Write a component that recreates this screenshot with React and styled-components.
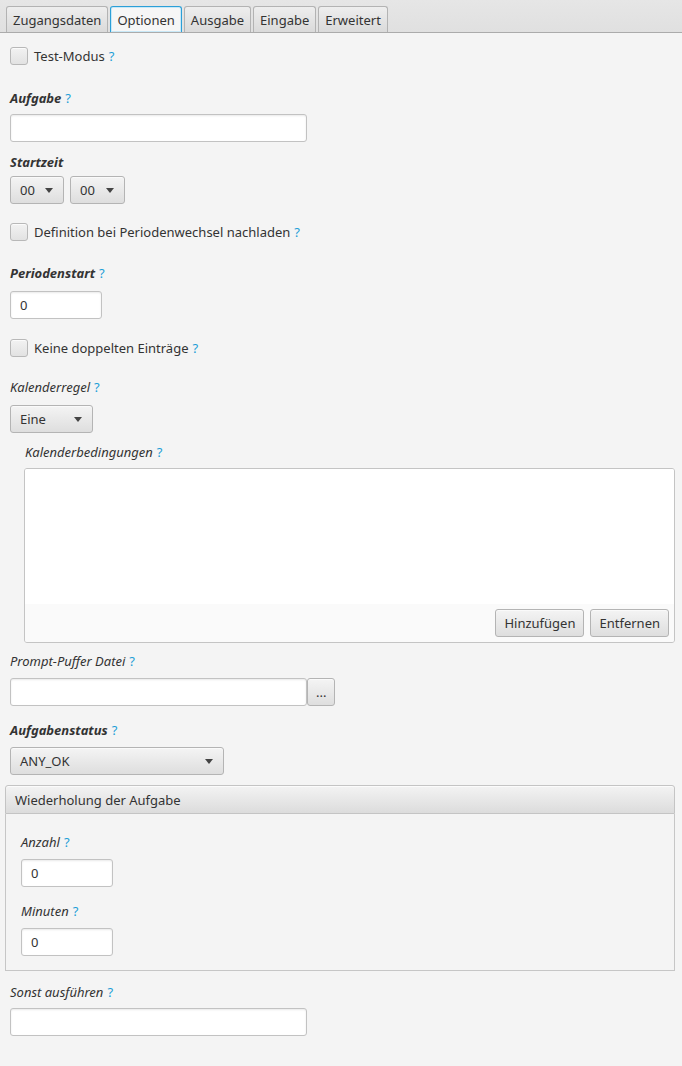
import React from "react";
import styled, { createGlobalStyle, css } from "styled-components";

const GlobalStyle = createGlobalStyle`
  html, body {
    margin: 0;
    padding: 0;
    background: #f4f4f4;
  }
  body {
    font-family: "Noto Sans", "Open Sans", sans-serif;
    font-size: 13px;
    color: #333;
  }
  * {
    box-sizing: border-box;
  }
`;

const Page = styled.div`
  width: 682px;
  min-height: 1066px;
  background: #f4f4f4;
`;

const TabBar = styled.div`
  display: flex;
  align-items: flex-end;
  gap: 2px;
  height: 33px;
  padding-left: 6px;
  background: linear-gradient(#e6e6e6, #e0e0e0);
  border-bottom: 1px solid #ababab;
`;

const Tab = styled.div`
  display: flex;
  align-items: center;
  height: 26px;
  padding: 0 6px;
  border: 1px solid #b3b3b3;
  border-bottom: none;
  border-radius: 3px 3px 0 0;
  background: linear-gradient(#eeeeee, #dadada);
  color: #333;
  ${({ $active }) =>
    $active &&
    css`
      background: #f6f6f6;
      border: 1px solid #2c9fd7;
      border-bottom: none;
      box-shadow: inset 0 0 0 1px #c8e8f7;
    `}
`;

const Content = styled.div`
  display: flex;
  flex-direction: column;
  align-items: flex-start;
  padding: 0 7px 20px 10px;
`;

const Label = styled.div`
  line-height: 18px;
  height: 18px;
  font-style: italic;
  font-weight: ${({ $bold }) => ($bold ? 700 : 400)};
  margin-top: ${({ $mt }) => $mt || 0}px;
  margin-left: ${({ $ml }) => $ml || 0}px;
  white-space: nowrap;
`;

const Help = styled.span`
  font-style: normal;
  font-weight: 400;
  color: #1d9ed7;
  margin-left: 4px;
`;

const CheckRow = styled.label`
  display: flex;
  align-items: center;
  gap: 6px;
  height: 17px;
  margin-top: ${({ $mt }) => $mt || 0}px;
  white-space: nowrap;
`;

const CheckBox = styled.span`
  display: block;
  width: 18px;
  height: 18px;
  border: 1px solid #b8b8b8;
  border-radius: 3px;
  background: linear-gradient(#f2f2f2, #e2e2e2);
  box-shadow: inset 0 1px 0 #fbfbfb;
`;

const TextField = styled.div`
  display: flex;
  align-items: center;
  width: ${({ $w }) => $w}px;
  height: 28px;
  padding: 0 9px;
  margin-top: ${({ $mt }) => $mt || 0}px;
  background: #fff;
  border: 1px solid #c2c2c2;
  border-radius: 3px;
  box-shadow: inset 0 1px 2px rgba(0, 0, 0, 0.09);
`;

const buttonLook = css`
  border: 1px solid #b4b4b4;
  border-radius: 3px;
  background: linear-gradient(#f4f4f4, #dedede);
  box-shadow: inset 0 1px 0 #fafafa;
  color: #333;
  font-family: inherit;
  font-size: 13px;
`;

const Combo = styled.div`
  ${buttonLook};
  display: flex;
  align-items: center;
  justify-content: space-between;
  width: ${({ $w }) => $w}px;
  height: 28px;
  padding: 0 10px 0 9px;
  margin-top: ${({ $mt }) => $mt || 0}px;
`;

const Arrow = styled.span`
  width: 0;
  height: 0;
  border-left: 4.5px solid transparent;
  border-right: 4.5px solid transparent;
  border-top: 5px solid #444;
`;

const Row = styled.div`
  display: flex;
  gap: ${({ $gap }) => $gap || 0}px;
  margin-top: ${({ $mt }) => $mt || 0}px;
`;

const ListBox = styled.div`
  display: flex;
  flex-direction: column;
  align-self: stretch;
  height: 175px;
  margin: 7px 0 0 14px;
  border: 1px solid #c4c4c4;
  border-radius: 3px;
  overflow: hidden;
`;

const ListArea = styled.div`
  flex: 1;
  background: #fff;
`;

const ListToolbar = styled.div`
  display: flex;
  justify-content: flex-end;
  align-items: center;
  gap: 6px;
  height: 38px;
  padding: 0 5px;
  background: #fafafa;
`;

const Button = styled.button`
  ${buttonLook};
  height: 28px;
  padding: 0 ${({ $px }) => $px || 8}px;
  margin: 0;
`;

const TitledPane = styled.div`
  align-self: stretch;
  margin: 10px 0 0 -5px;
`;

const PaneHeader = styled.div`
  display: flex;
  align-items: center;
  height: 29px;
  padding-left: 9px;
  border: 1px solid #c4c4c4;
  border-radius: 3px 3px 0 0;
  background: linear-gradient(#f3f3f3, #dcdcdc);
  box-shadow: inset 0 1px 0 #fbfbfb;
`;

const PaneBody = styled.div`
  display: flex;
  flex-direction: column;
  align-items: flex-start;
  padding: 19px 15px 14px;
  border: 1px solid #c6c6c6;
  border-top: none;
`;

const tabs = ["Zugangsdaten", "Optionen", "Ausgabe", "Eingabe", "Erweitert"];

const FieldLabel = ({ children, bold, mt, ml }) => (
  <Label $bold={bold} $mt={mt} $ml={ml}>
    {children}
    <Help>?</Help>
  </Label>
);

const Check = ({ children, mt }) => (
  <CheckRow $mt={mt}>
    <CheckBox />
    <span>
      {children}
      <Help>?</Help>
    </span>
  </CheckRow>
);

export default function App() {
  return (
    <Page>
      <GlobalStyle />
      <TabBar>
        {tabs.map((tab) => (
          <Tab key={tab} $active={tab === "Optionen"}>
            {tab}
          </Tab>
        ))}
      </TabBar>
      <Content>
        <Check mt={14}>Test-Modus</Check>

        <FieldLabel bold mt={25}>Aufgabe</FieldLabel>
        <TextField $w={297} $mt={7} />

        <Label $bold $mt={11}>Startzeit</Label>
        <Row $gap={6} $mt={5}>
          <Combo $w={54}>
            00 <Arrow />
          </Combo>
          <Combo $w={55}>
            00 <Arrow />
          </Combo>
        </Row>

        <Check mt={19}>Definition bei Periodenwechsel nachladen</Check>

        <FieldLabel bold mt={24}>Periodenstart</FieldLabel>
        <TextField $w={92} $mt={9}>0</TextField>

        <Check mt={20}>Keine doppelten Einträge</Check>

        <FieldLabel mt={22}>Kalenderregel</FieldLabel>
        <Combo $w={83} $mt={9}>
          Eine <Arrow />
        </Combo>

        <FieldLabel mt={10} ml={15}>Kalenderbedingungen</FieldLabel>
        <ListBox>
          <ListArea />
          <ListToolbar>
            <Button>Hinzufügen</Button>
            <Button>Entfernen</Button>
          </ListToolbar>
        </ListBox>

        <FieldLabel mt={9}>Prompt-Puffer Datei</FieldLabel>
        <Row $mt={8}>
          <TextField $w={297} />
          <Button $px={8}>...</Button>
        </Row>

        <FieldLabel bold mt={15}>Aufgabenstatus</FieldLabel>
        <Combo $w={214} $mt={8}>
          ANY_OK <Arrow />
        </Combo>

        <TitledPane>
          <PaneHeader>Wiederholung der Aufgabe</PaneHeader>
          <PaneBody>
            <FieldLabel>Anzahl</FieldLabel>
            <TextField $w={92} $mt={8}>0</TextField>
            <FieldLabel mt={15}>Minuten</FieldLabel>
            <TextField $w={92} $mt={8}>0</TextField>
          </PaneBody>
        </TitledPane>

        <FieldLabel mt={12}>Sonst ausführen</FieldLabel>
        <TextField $w={297} $mt={7} />
      </Content>
    </Page>
  );
}
